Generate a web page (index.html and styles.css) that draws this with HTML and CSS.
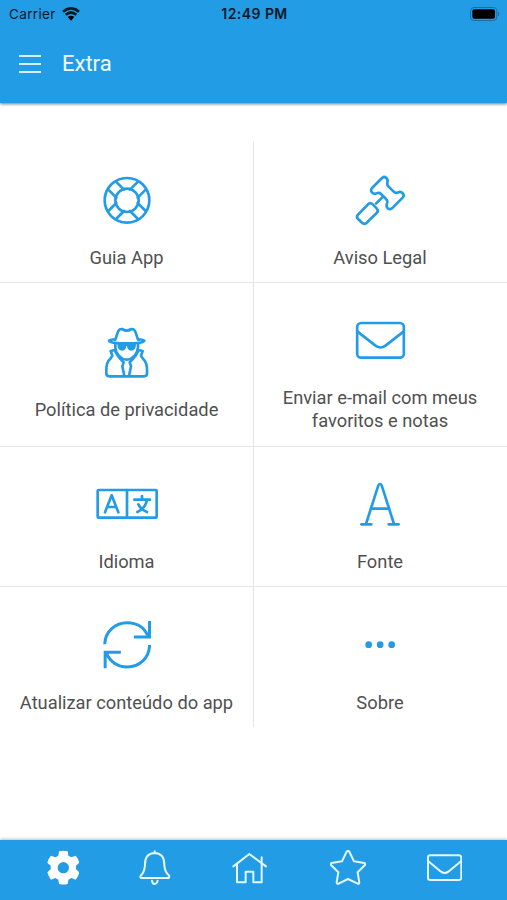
FILE: index.html
```html
<!DOCTYPE html>
<html lang="pt">
<head>
    <meta charset="UTF-8">
    <meta name="viewport" content="width=device-width, initial-scale=1.0">
    <title>Extra</title>
    <link rel="stylesheet" href="styles.css">
</head>
<body>
    <header>
        <div class="status">
            <div class="carrier">
                <span>Carrier</span>
                <svg class="wifi" viewBox="0 0 54 42">
                    <path d="M3 14Q27 -6 51 14" stroke-width="8"/>
                    <path d="M11 23Q27 10 43 23" stroke-width="8"/>
                    <path class="solid" d="M17 30Q27 22 37 30L27 41Z"/>
                </svg>
            </div>
            <span class="time">12:49 PM</span>
            <div class="battery-wrap">
                <svg class="battery" viewBox="0 0 90 42">
                    <rect class="case" x="1.500" y="1.500" width="79" height="39" rx="10"/>
                    <rect class="solid" x="7" y="7" width="68" height="28" rx="6"/>
                    <path class="case" d="M85 16q4 5 0 10"/>
                </svg>
            </div>
        </div>
        <div class="title-bar">
            <div class="menu"><i></i><i></i><i></i></div>
            <h1>Extra</h1>
        </div>
    </header>

    <main class="grid">
        <a class="cell">
            <svg viewBox="6 -28 270 270">
                <circle cx="141" cy="105" r="67"/>
                <circle cx="141" cy="105" r="35"/>
                <path d="M85 73L109 97M108 49L132 73M197 73L173 97M174 49L150 73M85 137L109 113M108 161L132 137M197 137L173 113M174 161L150 137"/>
            </svg>
            <span>Guia App</span>
        </a>
        <a class="cell">
            <svg viewBox="15 -28 270 270">
                <path d="M126 68L156 38Q163 32 169 38Q175 44 172 51L172 55Q171 60 176 64L191 79Q196 84 202 82L208 80Q214 79 219 85Q224 91 218 97L186 129Q179 134 173 129Q168 124 170 117L172 111Q173 105 168 101L153 86Q149 82 143 83L136 85Q129 86 125 80Q121 74 126 68Z"/>
                <path d="M156 97L138 115"/>
                <path d="M84 148L114 117Q121 110 128 117L140 129Q147 136 140 143L110 172Q103 179 96 172L84 161Q78 155 84 148Z"/>
            </svg>
            <span>Aviso Legal</span>
        </a>
        <a class="cell">
            <svg viewBox="6 -22 270 270">
                <path d="M106 73L114 49Q118 40 126 41Q134 46 140 46Q146 46 154 41Q162 40 166 49L174 73Q188 71 193 76Q190 84 140 84Q90 84 87 76Q92 71 106 73Z"/>
                <path d="M106 85V95Q106 108 115 119Q127 133 140 133Q153 133 165 119Q174 108 174 95V85"/>
                <path class="solid" d="M112 86H168Q168 106 153 106Q142 105 141 92H139Q138 105 127 106Q112 106 112 86Z"/>
                <path d="M105 104L92 107L97 121L91 130Q79 140 79 164V174Q79 183 88 183H192Q201 183 201 174V164Q201 140 189 130L183 121L188 107L175 104"/>
                <path d="M105 104Q108 119 131 141L127 153L133 182M175 104Q172 119 149 141L153 153L147 182"/>
            </svg>
            <span>Política de privacidade</span>
        </a>
        <a class="cell">
            <svg viewBox="194.500 -41 270 270">
                <rect x="261" y="40" width="140" height="104" rx="12"/>
                <path d="M262 66L316 108Q331 119 346 108L400 66"/>
            </svg>
            <span>Enviar e-mail com meus favoritos e notas</span>
        </a>
        <a class="cell">
            <svg viewBox="6 -29 270 270">
                <rect x="53" y="61" width="177" height="83" rx="3"/>
                <path d="M141 61V144"/>
                <path class="letter" d="M75 128L95 77L115 128M82 112H108"/>
                <path class="letter" d="M163 90H210M186 79V90M172 127Q196 116 201 91M175 104Q182 119 201 127"/>
            </svg>
            <span>Idioma</span>
        </a>
        <a class="cell">
            <svg viewBox="15 -30 270 270">
                <path d="M108 162L145 46Q150 38 155 46L192 162M122 116H178M94 163H124M176 163H206"/>
            </svg>
            <span>Fonte</span>
        </a>
        <a class="cell">
            <svg viewBox="214.500 -27 270 270">
                <path class="arrow" d="M283 103V99C285 65 314 38 350 38C378 38 402 52 412 78M417 33V81H370"/>
                <path class="arrow" d="M417 105V109C415 143 388 171 350 171C321 171 298 154 288 130M284 175V127H331"/>
            </svg>
            <span>Atualizar conteúdo do app</span>
        </a>
        <a class="cell">
            <svg viewBox="15 -57 270 270">
                <circle class="solid" cx="116" cy="74" r="10"/>
                <circle class="solid" cx="150.500" cy="74" r="10"/>
                <circle class="solid" cx="185" cy="74" r="10"/>
            </svg>
            <span>Sobre</span>
        </a>
    </main>

    <footer>
        <svg class="gear" viewBox="140 59 98 108">
            <path fill-rule="evenodd" d="M176 63Q189 60 202 63L204 76L213 81L226 76Q234 84 237 97L227 106V117L237 126Q234 139 226 148L213 143L204 148L202 161Q189 164 176 161L174 148L165 143L152 148Q144 139 141 126L151 117V106L141 97Q144 84 152 76L165 81L174 76ZM189 95A17 17 0 1 0 189 129A17 17 0 1 0 189 95Z"/>
        </svg>
        <svg class="bell" viewBox="418 59 94 108">
            <path d="M465 63V68M424 143Q420 139 425 134Q434 125 436 105Q435 69 465 68Q495 69 494 105Q496 125 507 134Q511 139 507 143ZM457 151Q458 161 465 161Q472 161 474 151"/>
        </svg>
        <svg class="home" viewBox="799 59 105 108">
            <path d="M803 108L851 71L901 108M814 99V156H840V124H863V156H888V81"/>
        </svg>
        <svg class="star" viewBox="231 59 109 108">
            <path d="M281 64Q285 60 289 64L303 93L334 98Q339 100 336 104L314 126L319 156Q319 162 314 160L285 146L257 160Q251 162 251 156L256 126L234 104Q231 100 236 98L267 93Z"/>
        </svg>
        <svg class="mail" viewBox="522 59 106 108">
            <rect x="525" y="75" width="100" height="74" rx="7"/>
            <path d="M526 93L564 124Q575 132 586 124L624 93"/>
        </svg>
    </footer>
</body>
</html>
```
FILE: styles.css
```css
/* Page */
* {
    box-sizing: border-box;
}
body {
    margin: 0;
    height: 900px;
    display: flex;
    flex-direction: column;
    font-family: Roboto, "Liberation Sans", sans-serif;
    background-color: #fff;
}
svg {
    display: block;
    fill: none;
    stroke-linecap: round;
    stroke-linejoin: round;
}

/* Header */
header {
    height: 103px;
    background-color: #239ce6;
    box-shadow: 0 1px 3px rgba(0, 0, 0, 0.55);
}
.status {
    display: grid;
    grid-template-columns: 1fr auto 1fr;
    align-items: center;
    height: 27px;
    padding: 0 7px 0 9px;
    font-family: Inter, sans-serif;
    font-size: 13.5px;
    color: #06182a;
}
.carrier {
    display: flex;
    align-items: center;
    gap: 6px;
    letter-spacing: 0.35px;
}
.time {
    font-weight: 600;
    font-size: 14px;
    letter-spacing: 0.45px;
}
.wifi {
    width: 18px;
    height: 14px;
    stroke: #06182a;
    stroke-linecap: butt;
}
.battery-wrap {
    display: flex;
    justify-content: flex-end;
}
.battery {
    width: 30px;
    height: 14px;
}
.status .solid {
    fill: #000;
    stroke: none;
}
.case {
    stroke: #1a6ea3;
    stroke-width: 3;
}
.title-bar {
    display: flex;
    align-items: center;
    height: 73px;
    padding-left: 19px;
    gap: 21px;
}
.menu {
    display: flex;
    flex-direction: column;
    gap: 6px;
    width: 22px;
}
.menu i {
    height: 2px;
    background-color: #d5f0ff;
}
h1 {
    margin: 0;
    font-size: 22px;
    font-weight: 400;
    color: #f2faff;
}

/* Options */
.grid {
    flex: 1;
    display: grid;
    grid-template-columns: 254px 253px;
    align-content: start;
    padding-top: 39px;
}
.cell {
    display: flex;
    flex-direction: column;
    align-items: center;
    justify-content: center;
    padding: 13.5px 16px 13px;
    border-bottom: 1px solid #e6e6e6;
    font-size: 18.3px;
    line-height: 23.2px;
    text-align: center;
    color: #505050;
}
.cell:nth-child(odd) {
    border-right: 1px solid #e6e6e6;
}
.cell:nth-child(even) {
    padding: 13.5px 17px 13px 16px;
}
.cell:nth-last-child(-n+2) {
    border-bottom: none;
}
.cell svg {
    flex: none;
    width: 90px;
    height: 90px;
    stroke: #239ce6;
    stroke-width: 8;
}
.cell .solid {
    fill: #239ce6;
    stroke: none;
}
.cell .letter {
    stroke-width: 8;
}
.cell .arrow {
    stroke-width: 9;
    stroke-linecap: butt;
    stroke-linejoin: miter;
}

/* Bottom tabs */
footer {
    display: flex;
    justify-content: space-between;
    align-items: center;
    height: 60px;
    padding: 0 44.7px 5px 46.7px;
    background-color: #239ce6;
    box-shadow: 0 -1px 3px rgba(0, 0, 0, 0.25);
}
footer svg {
    height: 36px;
    stroke: #e6f7ff;
    stroke-width: 6;
}
.gear {
    width: 32.7px;
    fill: #fff;
}
footer .gear {
    stroke: none;
}
.bell {
    width: 31.3px;
    margin-left: -1px;
}
.home {
    width: 35px;
}
.star {
    width: 36.3px;
    margin-left: 2px;
}
.mail {
    width: 35.3px;
}
```
